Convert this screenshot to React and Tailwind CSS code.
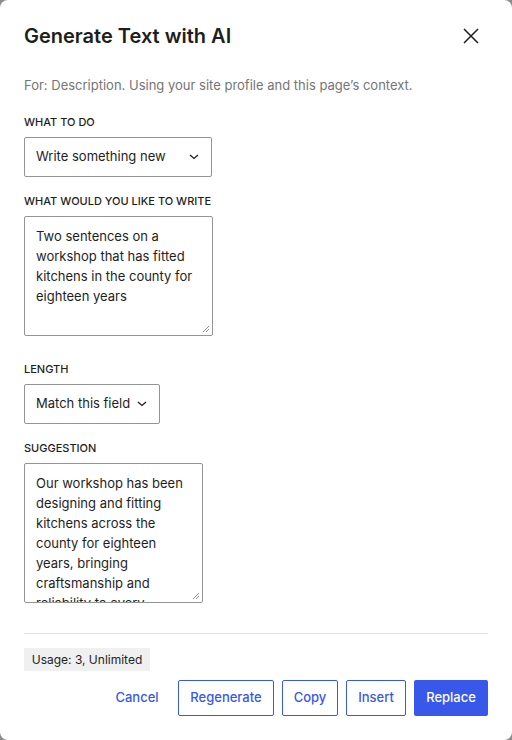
import React from "react";

const font = { fontFamily: "Inter, 'Noto Sans', sans-serif" };

function Chevron() {
  return (
    <svg width="10" height="6" viewBox="0 0 10 6" fill="none" className="shrink-0">
      <path d="M1 1l4 3.5L9 1" stroke="#1e1e1e" strokeWidth="1.3" />
    </svg>
  );
}

function Select({ value, width }) {
  return (
    <div
      className={`flex h-10 items-center justify-between border border-[#949494] rounded-[2px] bg-white pl-[11px] pr-3 text-[13px] text-[#1e1e1e] ${width}`}
    >
      <span>{value}</span>
      <Chevron />
    </div>
  );
}

function Label({ children, className = "" }) {
  return (
    <div className={`text-[11px] font-medium uppercase leading-4 text-[#1e1e1e] ${className}`}>
      {children}
    </div>
  );
}

function TextArea({ text, width, height }) {
  return (
    <div
      className={`relative overflow-hidden border border-[#949494] rounded-[2px] bg-white pl-[11px] pr-[15px] pt-[9px] text-[13px] leading-5 text-[#1e1e1e] ${width} ${height}`}
    >
      <div>{text}</div>
      <svg width="8" height="8" viewBox="0 0 8 8" className="absolute bottom-[2px] right-[2px]">
        <path d="M7 1L1 7M7 4L4 7" stroke="#8a8a8a" strokeWidth="1" />
      </svg>
    </div>
  );
}

export default function App() {
  const outline =
    "flex h-9 items-center justify-center rounded-[2px] border border-[#3858e9] text-[#3858e9]";
  return (
    <div className="min-h-[740px] w-[512px] bg-[#8c8c8c]" style={font}>
      <div className="flex h-[740px] w-[512px] flex-col rounded-lg bg-white px-6">
        <div className="flex items-center justify-between pt-[22px]">
          <h1 className="text-[20px] font-semibold leading-7 text-[#1e1e1e]">Generate Text with AI</h1>
          <svg width="16" height="16" viewBox="0 0 16 16" className="mr-[9px]" fill="none">
            <path d="M1 1l14 14M15 1L1 15" stroke="#1e1e1e" strokeWidth="1.5" />
          </svg>
        </div>

        <p className="mt-[25px] text-[13px] leading-5 text-[#757575]">
          For: Description. Using your site profile and this page’s context.
        </p>

        <Label className="mt-[19px]">What to do</Label>
        <div className="mt-[7px]">
          <Select value="Write something new" width="w-[188px]" />
        </div>

        <Label className="mt-[16px]">What would you like to write</Label>
        <div className="mt-[7px]">
          <TextArea
            text="Two sentences on a workshop that has fitted kitchens in the county for eighteen years"
            width="w-[189px]"
            height="h-[120px]"
          />
        </div>

        <Label className="mt-[25px]">Length</Label>
        <div className="mt-[7px]">
          <Select value="Match this field" width="w-[136px]" />
        </div>

        <Label className="mt-[16px]">Suggestion</Label>
        <div className="mt-[7px]">
          <TextArea
            text="Our workshop has been designing and fitting kitchens across the county for eighteen years, bringing craftsmanship and reliability to every project we undertake."
            width="w-[179px]"
            height="h-[140px]"
          />
        </div>

        <div className="mt-[30px] border-t border-[#e0e0e0]" />

        <div className="mt-[14px] flex">
          <span className="flex h-[23px] w-[126px] items-center justify-center bg-[#f0f0f0] text-[12px] text-[#1e1e1e]">
            Usage: 3, Unlimited
          </span>
        </div>

        <div className="mt-[9px] flex justify-end gap-2 text-[13px] font-medium">
          <button className="flex h-9 w-[66px] items-center justify-center text-[#3858e9]">Cancel</button>
          <button className={`${outline} w-[96px]`}>Regenerate</button>
          <button className={`${outline} w-[56px]`}>Copy</button>
          <button className={`${outline} w-[60px]`}>Insert</button>
          <button className="flex h-9 w-[74px] items-center justify-center rounded-[2px] bg-[#3858e9] text-white">
            Replace
          </button>
        </div>
      </div>
    </div>
  );
}
